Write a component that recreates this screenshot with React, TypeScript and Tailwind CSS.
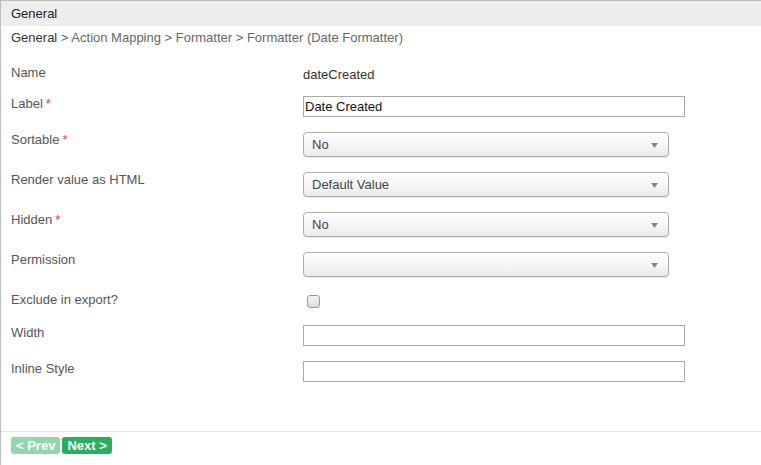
import React from 'react';

const font = "font-['Liberation_Sans',Arial,sans-serif]";

const Req = () => <span className="text-[#e33] ml-[3px]">*</span>;

const Select = ({ value }: { value: string }) => (
  <div className="relative w-[366px] h-[25px] rounded-[4px] border border-[#aaa] bg-gradient-to-b from-white via-[#f6f6f6] to-[#eaeaea] shadow-[0_1px_1px_rgba(0,0,0,0.08)] flex items-center pl-[8px] text-[#444]">
    <span className="leading-[15px]">{value}</span>
    <svg className="absolute right-[10px] top-[10px]" width="7" height="5" viewBox="0 0 7 5">
      <path d="M0 0 L7 0 L3.5 5 Z" fill="#888" />
    </svg>
  </div>
);

const TextInput = ({ value = '' }: { value?: string }) => (
  <div className="w-[382px] h-[21px] border border-[#aaa] bg-white flex items-center pl-[1px] text-[#111] leading-[15px]">
    {value}
  </div>
);

type Row = { label: string; required?: boolean; field: React.ReactNode; h: string };

export default function App() {
  const rows: Row[] = [
    { label: 'Name', field: <span className="text-[#333] leading-[15px]">dateCreated</span>, h: 'h-[16px]' },
    { label: 'Label', required: true, field: <TextInput value="Date Created" />, h: 'h-[21px]' },
    { label: 'Sortable', required: true, field: <Select value="No" />, h: 'h-[25px]' },
    { label: 'Render value as HTML', field: <Select value="Default Value" />, h: 'h-[25px]' },
    { label: 'Hidden', required: true, field: <Select value="No" />, h: 'h-[25px]' },
    { label: 'Permission', field: <Select value="" />, h: 'h-[25px]' },
    {
      label: 'Exclude in export?',
      field: (
        <div className="mt-[3px] ml-[4px] w-[13px] h-[13px] rounded-[3px] border border-[#999] bg-gradient-to-b from-[#f4f4f4] to-[#dcdcdc]" />
      ),
      h: 'h-[18px]',
    },
    { label: 'Width', field: <TextInput />, h: 'h-[21px]' },
    { label: 'Inline Style', field: <TextInput />, h: 'h-[21px]' },
  ];

  return (
    <div className={`${font} w-[761px] h-[465px] bg-white border-l border-t border-[#bdbdbd] flex flex-col text-[13px] overflow-hidden`}>
      <div className="h-[25px] bg-[#eeeeee] px-[10px] flex items-center text-[#222]">General</div>
      <div className="px-[10px] mt-[4px] leading-[15px] text-[#666]">
        <span className="text-[#333]">General</span> &gt; Action Mapping &gt; Formatter &gt; Formatter (Date Formatter)
      </div>
      <div className="flex-1 mt-[20px] px-[10px] flex flex-col gap-[15px]">
        {rows.map((r) => (
          <div key={r.label} className={`flex items-start ${r.h}`}>
            <div className="w-[292px] text-[#555] leading-[15px]">
              {r.label}
              {r.required && <Req />}
            </div>
            <div>{r.field}</div>
          </div>
        ))}
      </div>
      <div className="border-t border-[#e6e6e6] h-[34px] px-[10px] pt-[5px] flex items-start gap-[2px]">
        <button className="h-[17px] px-[5px] rounded-[3px] bg-[#92d6ac] text-white font-bold leading-[17px]">&lt; Prev</button>
        <button className="h-[17px] px-[5px] rounded-[3px] bg-[#29ad60] text-white font-bold leading-[17px]">Next &gt;</button>
      </div>
    </div>
  );
}
